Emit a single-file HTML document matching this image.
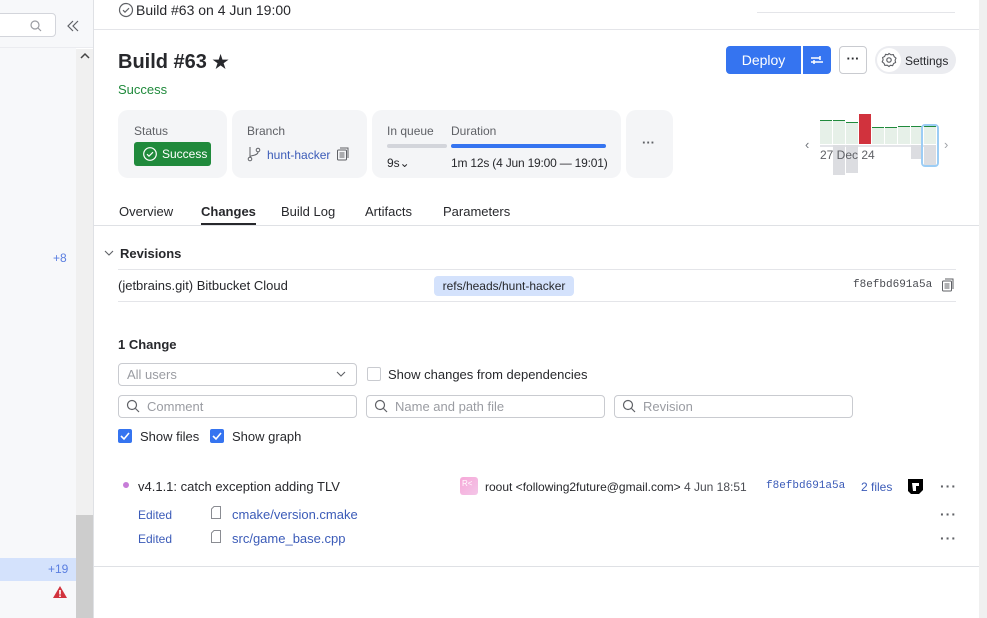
<!DOCTYPE html>
<html><head><meta charset="utf-8"><style>
*{margin:0;padding:0;box-sizing:border-box}
body{width:987px;height:618px;overflow:hidden;position:relative;background:#fff;font-family:"Liberation Sans",sans-serif;font-size:13px;color:#27282c}
.a{position:absolute;white-space:nowrap}
.card{position:absolute;top:110px;height:68px;background:#f4f5f7;border-radius:10px}
.lbl{color:#5f6166;font-size:12px}
.inp{position:absolute;height:23px;border:1px solid #c9cbd0;border-radius:4px;color:#9a9ca2;font-size:13px;line-height:21px;padding-left:28px}
.cb{position:absolute;width:14px;height:14px;border-radius:2px;background:#3574f0}
.dots{position:absolute;color:#5f6166;font-size:14px;letter-spacing:1px;font-weight:bold}
</style></head><body>
<div class="a" style="left:0;top:0;width:76px;height:618px;background:#f7f8fa"></div>
<div class="a" style="left:0;top:0;width:93px;height:48px;background:#f7f8fa;border-bottom:1px solid #ebecf0"></div>
<div class="a" style="left:-5px;top:13px;width:61px;height:24px;background:#fff;border:1px solid #d3d5db;border-radius:4px"></div>
<svg class="a" style="left:30px;top:20px" width="12" height="12"><circle cx="5" cy="5" r="4" fill="none" stroke="#9a9ca2" stroke-width="1.2"/><path d="M8 8l3 3" stroke="#9a9ca2" stroke-width="1.2"/></svg>
<svg class="a" style="left:66px;top:19px" width="14" height="14"><path d="M7 2L2 7l5 5M12 2L7 7l5 5" fill="none" stroke="#5f6166" stroke-width="1.2"/></svg>
<div class="a" style="left:76px;top:49px;width:17px;height:466px;background:#f0f0f0"></div>
<div class="a" style="left:76px;top:515px;width:17px;height:103px;background:#cdcdcd"></div>
<svg class="a" style="left:80px;top:52px" width="10" height="8"><path d="M1 6l4-4 4 4" fill="none" stroke="#444" stroke-width="1.5"/></svg>
<div class="a" style="left:53px;top:251px;color:#5a7ee0;font-size:12px">+8</div>
<div class="a" style="left:0;top:558px;width:76px;height:23px;background:#d4e2fc"></div>
<div class="a" style="left:48px;top:562px;color:#5a7ee0;font-size:12px">+19</div>
<svg class="a" style="left:52px;top:585px" width="16" height="14"><path d="M8 1L15 13H1z" fill="#d1323d"/><rect x="7.2" y="5" width="1.6" height="4.5" fill="#fff"/><rect x="7.2" y="10.5" width="1.6" height="1.5" fill="#fff"/></svg>
<div class="a" style="left:93px;top:0;width:1px;height:618px;background:#dfe1e5"></div>
<div class="a" style="left:979px;top:0;width:8px;height:618px;background:#f0f0f0"></div>
<div class="a" style="left:94px;top:29px;width:885px;height:1px;background:#e4e5e9"></div>
<svg class="a" style="left:118px;top:2px" width="16" height="16"><circle cx="8" cy="8" r="6.5" fill="none" stroke="#5f6166" stroke-width="1.2"/><path d="M5 8.2l2 2 4-4" fill="none" stroke="#5f6166" stroke-width="1.2"/></svg>
<div class="a" style="left:136px;top:2px;font-size:14px;color:#27282c">Build #63 on 4 Jun 19:00</div>
<div class="a" style="left:757px;top:12px;width:198px;height:1px;background:#e4e5e9"></div>
<div class="a" style="left:118px;top:51px;font-size:20px;font-weight:bold">Build #63 <span style="font-size:18px">★</span></div>
<div class="a" style="left:118px;top:82px;color:#208a3c">Success</div>
<div class="a" style="left:726px;top:46px;width:75px;height:28px;background:#3574f0;border-radius:4px 0 0 4px;color:#fff;font-size:14px;line-height:29px;text-align:center">Deploy</div>
<div class="a" style="left:803px;top:46px;width:28px;height:28px;background:#3574f0;border-radius:0 4px 4px 0"></div>
<svg class="a" style="left:809px;top:52px" width="16" height="16"><path d="M2 6h9M2 10h12M11 4v4M5 8v4" stroke="#fff" stroke-width="1.5" fill="none"/></svg>
<div class="a" style="left:839px;top:46px;width:28px;height:28px;border:1px solid #c9cbd0;border-radius:4px;text-align:center;line-height:24px;font-weight:bold;color:#27282c">···</div>
<div class="a" style="left:875px;top:46px;width:81px;height:28px;background:#ebecf0;border-radius:14px"></div>
<div class="a" style="left:877px;top:48px;width:24px;height:24px;background:#fff;border-radius:12px"></div>
<svg class="a" style="left:881px;top:52px" width="16" height="16"><circle cx="8" cy="8" r="2.2" fill="none" stroke="#5f6166" stroke-width="1.2"/><path d="M8 1.5l2 1.3 2.3-.2.9 2.1 1.8 1.5-.9 2 .5 2.3-2 1-1 2.1-2.3-.3L8 14.5l-1.8-1.3-2.3.2-.9-2.1L1.2 9.8l.9-2-.5-2.3 2-1 1-2.1 2.3.3z" fill="none" stroke="#5f6166" stroke-width="1.1"/></svg>
<div class="a" style="left:905px;top:54px;font-size:12px">Settings</div>
<div class="card" style="left:118px;width:109px"></div>
<div class="a lbl" style="left:134px;top:124px">Status</div>
<div class="a" style="left:134px;top:142px;width:77px;height:24px;background:#208a3c;border-radius:3px;color:#fff;font-size:12px;line-height:24px;padding-left:28px">Success</div>
<svg class="a" style="left:142px;top:146px" width="16" height="16"><circle cx="8" cy="8" r="6.3" fill="none" stroke="#fff" stroke-width="1.2"/><path d="M5 8.2l2 2 4-4" fill="none" stroke="#fff" stroke-width="1.2"/></svg>
<div class="card" style="left:232px;width:135px"></div>
<div class="a lbl" style="left:247px;top:124px">Branch</div>
<svg class="a" style="left:247px;top:146px" width="14" height="16"><circle cx="3" cy="13" r="1.8" fill="none" stroke="#5f6166"/><circle cx="11" cy="4" r="1.8" fill="none" stroke="#5f6166"/><path d="M3 1v10M11 6c0 4-8 3-8 5" fill="none" stroke="#5f6166"/></svg>
<div class="a" style="left:267px;top:148px;color:#3b5bb8;font-size:12px">hunt-hacker</div>
<svg class="a" style="left:336px;top:147px" width="14" height="14"><rect x="1.5" y="3" width="9" height="10" rx="1" fill="none" stroke="#5f6166"/><path d="M4 1h8v10" fill="none" stroke="#5f6166"/><path d="M3.5 6h5M3.5 8h5M3.5 10h5" stroke="#5f6166"/></svg>
<div class="card" style="left:372px;width:249px"></div>
<div class="a lbl" style="left:387px;top:124px">In queue</div>
<div class="a lbl" style="left:451px;top:124px">Duration</div>
<div class="a" style="left:387px;top:144px;width:60px;height:4px;background:#d3d5db;border-radius:2px"></div>
<div class="a" style="left:451px;top:144px;width:155px;height:4px;background:#3574f0;border-radius:2px"></div>
<div class="a" style="left:387px;top:156px;font-size:12px">9s⌄</div>
<div class="a" style="left:451px;top:156px;font-size:12px;letter-spacing:-0.2px">1m 12s (4 Jun 19:00 — 19:01)</div>
<div class="card" style="left:626px;width:47px"></div>
<div class="a" style="left:642px;top:135px;color:#5f6166;font-weight:bold">···</div>
<div class="a" style="left:805px;top:137px;color:#6f737a;font-size:13px">‹</div>
<div class="a" style="left:944px;top:137px;color:#a0a3a8;font-size:13px">›</div>
<div class="a" style="left:820px;top:120px;width:12px;height:24px;background:#e6f0e8;border-top:1px solid #208a3c"></div>
<div class="a" style="left:833px;top:120px;width:12px;height:24px;background:#e6f0e8;border-top:1px solid #208a3c"></div>
<div class="a" style="left:846px;top:122px;width:12px;height:22px;background:#e6f0e8;border-top:1px solid #208a3c"></div>
<div class="a" style="left:859px;top:114px;width:12px;height:30px;background:#d1323d"></div>
<div class="a" style="left:872px;top:127px;width:12px;height:17px;background:#e6f0e8;border-top:1px solid #208a3c"></div>
<div class="a" style="left:885px;top:127px;width:12px;height:17px;background:#e6f0e8;border-top:1px solid #208a3c"></div>
<div class="a" style="left:898px;top:126px;width:12px;height:18px;background:#e6f0e8;border-top:1px solid #208a3c"></div>
<div class="a" style="left:911px;top:126px;width:12px;height:18px;background:#e6f0e8;border-top:1px solid #208a3c"></div>
<div class="a" style="left:820px;top:145px;width:116px;height:2px;background:#e4e5e9"></div>
<div class="a" style="left:833px;top:145px;width:12px;height:30px;background:#dcdde1"></div>
<div class="a" style="left:846px;top:145px;width:12px;height:28px;background:#dcdde1"></div>
<div class="a" style="left:911px;top:145px;width:12px;height:14px;background:#dcdde1"></div>
<div class="a" style="left:924px;top:126px;width:12px;height:18px;background:#e6f0e8;border-top:1px solid #208a3c"></div>
<div class="a" style="left:924px;top:145px;width:12px;height:20px;background:#dcdde1"></div>
<div class="a" style="left:921px;top:124px;width:18px;height:43px;border:2px solid #9ccdf5;border-radius:4px"></div>
<div class="a" style="left:820px;top:148px;color:#5f6166;font-size:12px">27 Dec 24</div>
<div class="a" style="left:119px;top:204px">Overview</div>
<div class="a" style="left:201px;top:204px;font-weight:bold">Changes</div>
<div class="a" style="left:201px;top:223px;width:55px;height:2px;background:#27282c"></div>
<div class="a" style="left:281px;top:204px">Build Log</div>
<div class="a" style="left:365px;top:204px">Artifacts</div>
<div class="a" style="left:443px;top:204px">Parameters</div>
<div class="a" style="left:94px;top:225px;width:885px;height:1px;background:#dfe1e5"></div>
<svg class="a" style="left:104px;top:249px" width="10" height="8"><path d="M1 2l4 4 4-4" fill="none" stroke="#5f6166" stroke-width="1.1"/></svg>
<div class="a" style="left:120px;top:246px;font-weight:bold">Revisions</div>
<div class="a" style="left:118px;top:269px;width:838px;height:1px;background:#e4e5e9"></div>
<div class="a" style="left:118px;top:301px;width:838px;height:1px;background:#e4e5e9"></div>
<div class="a" style="left:118px;top:278px">(jetbrains.git) Bitbucket Cloud</div>
<div class="a" style="left:434px;top:276px;width:140px;height:20px;background:#d4e2fc;border-radius:4px;font-size:12px;line-height:20px;text-align:center">refs/heads/hunt-hacker</div>
<div class="a" style="left:853px;top:279px;font-family:'Liberation Mono',monospace;font-size:11px;color:#4a4c52">f8efbd691a5a</div>
<svg class="a" style="left:941px;top:278px" width="14" height="14"><rect x="1.5" y="3" width="9" height="10" rx="1" fill="none" stroke="#5f6166"/><path d="M4 1h8v10" fill="none" stroke="#5f6166"/><path d="M3.5 6h5M3.5 8h5M3.5 10h5" stroke="#5f6166"/></svg>
<div class="a" style="left:118px;top:337px;font-weight:bold">1 Change</div>
<div class="inp" style="left:118px;top:363px;width:239px;padding-left:8px">All users</div>
<svg class="a" style="left:336px;top:370px" width="10" height="8"><path d="M1 2l4 4 4-4" fill="none" stroke="#5f6166" stroke-width="1.1"/></svg>
<div class="a" style="left:367px;top:367px;width:14px;height:14px;border:1px solid #c9cbd0;border-radius:2px"></div>
<div class="a" style="left:388px;top:367px">Show changes from dependencies</div>
<div class="inp" style="left:118px;top:395px;width:239px">Comment</div>
<div class="inp" style="left:366px;top:395px;width:239px">Name and path file</div>
<div class="inp" style="left:614px;top:395px;width:239px">Revision</div>
<svg class="a" style="left:126px;top:399px" width="14" height="14"><circle cx="6" cy="6" r="4.5" fill="none" stroke="#5f6166" stroke-width="1.2"/><path d="M9.5 9.5l3.5 3.5" stroke="#5f6166" stroke-width="1.2"/></svg>
<svg class="a" style="left:374px;top:399px" width="14" height="14"><circle cx="6" cy="6" r="4.5" fill="none" stroke="#5f6166" stroke-width="1.2"/><path d="M9.5 9.5l3.5 3.5" stroke="#5f6166" stroke-width="1.2"/></svg>
<svg class="a" style="left:622px;top:399px" width="14" height="14"><circle cx="6" cy="6" r="4.5" fill="none" stroke="#5f6166" stroke-width="1.2"/><path d="M9.5 9.5l3.5 3.5" stroke="#5f6166" stroke-width="1.2"/></svg>
<div class="cb" style="left:118px;top:429px"></div>
<svg class="a" style="left:118px;top:429px" width="14" height="14"><path d="M3 7l3 3 5-6" fill="none" stroke="#fff" stroke-width="1.6"/></svg>
<div class="a" style="left:140px;top:429px">Show files</div>
<div class="cb" style="left:210px;top:429px"></div>
<svg class="a" style="left:210px;top:429px" width="14" height="14"><path d="M3 7l3 3 5-6" fill="none" stroke="#fff" stroke-width="1.6"/></svg>
<div class="a" style="left:232px;top:429px">Show graph</div>
<div class="a" style="left:123px;top:482px;width:6px;height:6px;border-radius:3px;background:#c77dd8"></div>
<div class="a" style="left:138px;top:479px">v4.1.1: catch exception adding TLV</div>
<div class="a" style="left:460px;top:477px;width:18px;height:18px;border-radius:3px;background:linear-gradient(135deg,#f7a8d8,#f3c6e8);color:#fff;font-size:8px;padding:2px">R&lt;</div>
<div class="a" style="left:485px;top:480px;font-size:12px">roout &lt;following2future@gmail.com&gt; <span style="color:#4a4c52">4 Jun 18:51</span></div>
<div class="a" style="left:766px;top:480px;font-family:'Liberation Mono',monospace;font-size:11px;color:#3b5bb8">f8efbd691a5a</div>
<div class="a" style="left:861px;top:480px;font-size:12px;color:#3b5bb8">2 files</div>
<svg class="a" style="left:908px;top:479px" width="15" height="15"><path d="M0 0h15v11l-4 4H3L0 12z" fill="#000"/><path d="M4 4h7v3H8v5H5z" fill="#fff"/></svg>
<div class="dots" style="left:940px;top:478px">···</div>
<div class="a" style="left:138px;top:508px;color:#3b5bb8;font-size:12px">Edited</div>
<svg class="a" style="left:211px;top:506px" width="10" height="13"><path d="M3 .5h6.5v12h-9V3z" fill="none" stroke="#8a8c92"/></svg>
<div class="a" style="left:232px;top:507px;color:#3b5bb8">cmake/version.cmake</div>
<div class="dots" style="left:940px;top:506px">···</div>
<div class="a" style="left:138px;top:532px;color:#3b5bb8;font-size:12px">Edited</div>
<svg class="a" style="left:211px;top:530px" width="10" height="13"><path d="M3 .5h6.5v12h-9V3z" fill="none" stroke="#8a8c92"/></svg>
<div class="a" style="left:232px;top:531px;color:#3b5bb8">src/game_base.cpp</div>
<div class="dots" style="left:940px;top:530px">···</div>
<div class="a" style="left:94px;top:566px;width:885px;height:1px;background:#dfe1e5"></div>
</body></html>
